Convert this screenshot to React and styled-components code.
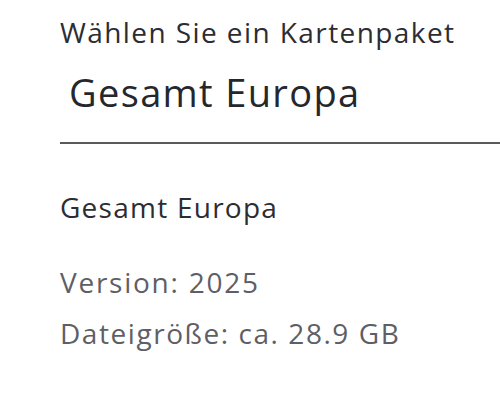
import React from "react";
import styled, { createGlobalStyle } from "styled-components";

const Global = createGlobalStyle`
  html, body { margin: 0; padding: 0; background: #fff; }
  body { font-family: "Open Sans", "Noto Sans", sans-serif; }
`;

const Page = styled.div`
  width: 500px;
  height: 400px;
  box-sizing: border-box;
  padding: 14px 0 0 60px;
  display: flex;
  flex-direction: column;
  overflow: hidden;
`;

const Label = styled.div`
  font-size: 28px;
  line-height: 36px;
  letter-spacing: 1.42px;
  color: #2c2d33;
`;

const Field = styled.div`
  margin-top: 17px;
  padding: 0 0 25px 9px;
  border-bottom: 2px solid #5a5a5a;
  font-size: 38px;
  line-height: 50px;
  letter-spacing: 1.35px;
  color: #26272d;
`;

const Title = styled.div`
  margin-top: 45px;
  font-size: 28px;
  line-height: 36px;
  letter-spacing: 1.25px;
  color: #2c2d33;
`;

const Info = styled.div`
  margin-top: ${(p) => p.$gap || 0}px;
  font-size: 28px;
  line-height: 51px;
  letter-spacing: ${(p) => p.$spacing || 1.55}px;
  color: #5e5f66;
`;

export default function App() {
  return (
    <>
      <Global />
      <Page>
        <Label>Wählen Sie ein Kartenpaket</Label>
        <Field>Gesamt Europa</Field>
        <Title>Gesamt Europa</Title>
        <Info $gap={32} $spacing={1.75}>Version: 2025</Info>
        <Info>Dateigröße: ca. 28.9 GB</Info>
      </Page>
    </>
  );
}
